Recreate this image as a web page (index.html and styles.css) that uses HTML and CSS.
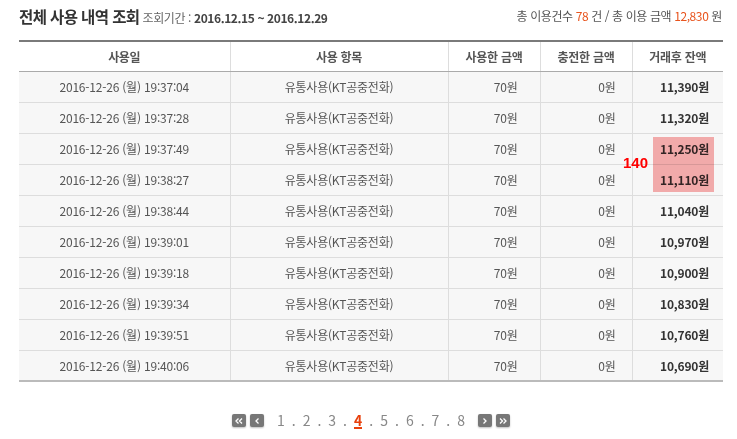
FILE: index.html
```html
<!DOCTYPE html>
<html lang="ko">
<head>
<meta charset="utf-8">
<link rel="stylesheet" href="styles.css">
</head>
<body>
<div class="page">
  <div class="head">
    <div class="title-wrap">
      <h1 class="title">전체 사용 내역 조회</h1>
      <span class="period">조회기간 : <b>2016.12.15 ~ 2016.12.29</b></span>
    </div>
    <div class="summary">총 이용건수 <em>78</em> 건 / 총 이용 금액 <em>12,830</em> 원</div>
  </div>
  <div class="table-wrap">
    <table class="list">
      <colgroup>
        <col class="c1"><col class="c2"><col class="c3"><col class="c4"><col class="c5">
      </colgroup>
      <thead>
        <tr><th>사용일</th><th>사용 항목</th><th>사용한 금액</th><th>충전한 금액</th><th>거래후 잔액</th></tr>
      </thead>
      <tbody>
        <tr><td>2016-12-26 (월) 19:37:04</td><td>유통사용(KT공중전화)</td><td class="used">70원</td><td class="charge">0원</td><td class="bal">11,390원</td></tr>
        <tr><td>2016-12-26 (월) 19:37:28</td><td>유통사용(KT공중전화)</td><td class="used">70원</td><td class="charge">0원</td><td class="bal">11,320원</td></tr>
        <tr><td>2016-12-26 (월) 19:37:49</td><td>유통사용(KT공중전화)</td><td class="used">70원</td><td class="charge">0원</td><td class="bal">11,250원</td></tr>
        <tr><td>2016-12-26 (월) 19:38:27</td><td>유통사용(KT공중전화)</td><td class="used">70원</td><td class="charge">0원</td><td class="bal">11,110원</td></tr>
        <tr><td>2016-12-26 (월) 19:38:44</td><td>유통사용(KT공중전화)</td><td class="used">70원</td><td class="charge">0원</td><td class="bal">11,040원</td></tr>
        <tr><td>2016-12-26 (월) 19:39:01</td><td>유통사용(KT공중전화)</td><td class="used">70원</td><td class="charge">0원</td><td class="bal">10,970원</td></tr>
        <tr><td>2016-12-26 (월) 19:39:18</td><td>유통사용(KT공중전화)</td><td class="used">70원</td><td class="charge">0원</td><td class="bal">10,900원</td></tr>
        <tr><td>2016-12-26 (월) 19:39:34</td><td>유통사용(KT공중전화)</td><td class="used">70원</td><td class="charge">0원</td><td class="bal">10,830원</td></tr>
        <tr><td>2016-12-26 (월) 19:39:51</td><td>유통사용(KT공중전화)</td><td class="used">70원</td><td class="charge">0원</td><td class="bal">10,760원</td></tr>
        <tr><td>2016-12-26 (월) 19:40:06</td><td>유통사용(KT공중전화)</td><td class="used">70원</td><td class="charge">0원</td><td class="bal">10,690원</td></tr>
      </tbody>
    </table>
    <div class="mark"></div>
    <div class="diff">140</div>
  </div>
  <div class="paging">
    <span class="pbtn"><svg width="8" height="6" viewBox="0 0 8 6"><path d="M3.5 0.5 L1 3 L3.5 5.5 M7 0.5 L4.5 3 L7 5.5" fill="none" stroke="#fff" stroke-width="1.3"/></svg></span>
    <span class="pbtn"><svg width="5" height="6" viewBox="0 0 5 6"><path d="M3.5 0.5 L1 3 L3.5 5.5" fill="none" stroke="#fff" stroke-width="1.3"/></svg></span>
    <span class="nums">
      <a>1</a><i>.</i><a>2</a><i>.</i><a>3</a><i>.</i><a class="on">4</a><i>.</i><a>5</a><i>.</i><a>6</a><i>.</i><a>7</a><i>.</i><a>8</a>
    </span>
    <span class="pbtn"><svg width="5" height="6" viewBox="0 0 5 6"><path d="M1.5 0.5 L4 3 L1.5 5.5" fill="none" stroke="#fff" stroke-width="1.3"/></svg></span>
    <span class="pbtn"><svg width="8" height="6" viewBox="0 0 8 6"><path d="M1 0.5 L3.5 3 L1 5.5 M4.5 0.5 L7 3 L4.5 5.5" fill="none" stroke="#fff" stroke-width="1.3"/></svg></span>
  </div>
</div>
</body>
</html>
```
FILE: styles.css
```css
* { box-sizing: border-box; }
html, body { margin: 0; padding: 0; background: #fff; }
body {
  font-family: "Noto Sans CJK KR", "Noto Sans", sans-serif;
  color: #555;
  font-size: 12px;
}
.page { width: 737px; padding: 3px 14px 0 19px; }
.head {
  display: flex;
  justify-content: space-between;
  align-items: flex-end;
  height: 24px;
}
.title-wrap { display: flex; align-items: baseline; gap: 3px; }
.title {
  margin: 0;
  font-size: 15.5px;
  font-weight: 700;
  color: #333;
  letter-spacing: -0.6px;
  line-height: 22px;
}
.period { font-size: 12px; color: #666; letter-spacing: -0.4px; }
.period b { color: #444; font-weight: 700; letter-spacing: -0.4px; }
.summary { font-size: 12px; color: #555; letter-spacing: -0.4px; padding-bottom: 3px; padding-right: 1px; }
.summary em { font-style: normal; color: #e8531c; }
.table-wrap { position: relative; margin-top: 13px; width: 704px; }
.list {
  width: 704px;
  border-collapse: collapse;
  table-layout: fixed;
  border-top: 2px solid #7a7a7a;
  border-bottom: 2px solid #bbb;
}
.c1 { width: 211px; } .c2 { width: 218px; } .c3 { width: 92px; } .c4 { width: 92px; } .c5 { width: 91px; }
.list th {
  height: 30px;
  background: #fff;
  font-weight: 700;
  font-size: 12px;
  color: #555;
  border-left: 1px solid #ddd;
  border-bottom: 1px solid #aaa;
  padding: 0;
  letter-spacing: -0.3px;
}
.list td {
  height: 31px;
  background: #f7f7f7;
  border-left: 1px solid #ddd;
  border-bottom: 1px solid #ddd;
  text-align: center;
  padding: 0;
  color: #555;
  letter-spacing: -0.2px;
}
.list th:first-child, .list td:first-child { border-left: none; }
.list td.used { text-align: right; padding-right: 22px; }
.list td.charge { text-align: right; padding-right: 16px; }
.list td.bal { text-align: right; padding-right: 14px; font-weight: 700; color: #333; }
.mark {
  position: absolute;
  left: 634px;
  top: 97px;
  width: 61px;
  height: 55px;
  background: #f9b0b0;
  mix-blend-mode: multiply;
}
.diff {
  position: absolute;
  left: 604px;
  top: 114px;
  font-family: "Liberation Sans", Arial, sans-serif;
  font-weight: 700;
  font-size: 15px;
  color: #f00;
}
.paging {
  display: flex;
  justify-content: center;
  align-items: center;
  gap: 4px;
  margin-top: 30px;
}
.pbtn {
  width: 14px;
  height: 13px;
  background: #777;
  border-radius: 2px;
  display: inline-flex;
  align-items: center;
  justify-content: center;
  box-shadow: 0 1px 2px rgba(0,0,0,0.25);
}
.nums { display: inline-flex; align-items: baseline; margin: 0 5px; font-size: 14px; line-height: 16px; }
.nums a { color: #888; padding: 0 3.5px; }
.nums i { font-style: normal; color: #888; padding: 0 3.5px; }
.nums a.on { color: #e8400c; font-weight: 700; border-bottom: 2px solid #e8400c; line-height: 13px; margin: 0 3.5px; padding: 0; }
```
